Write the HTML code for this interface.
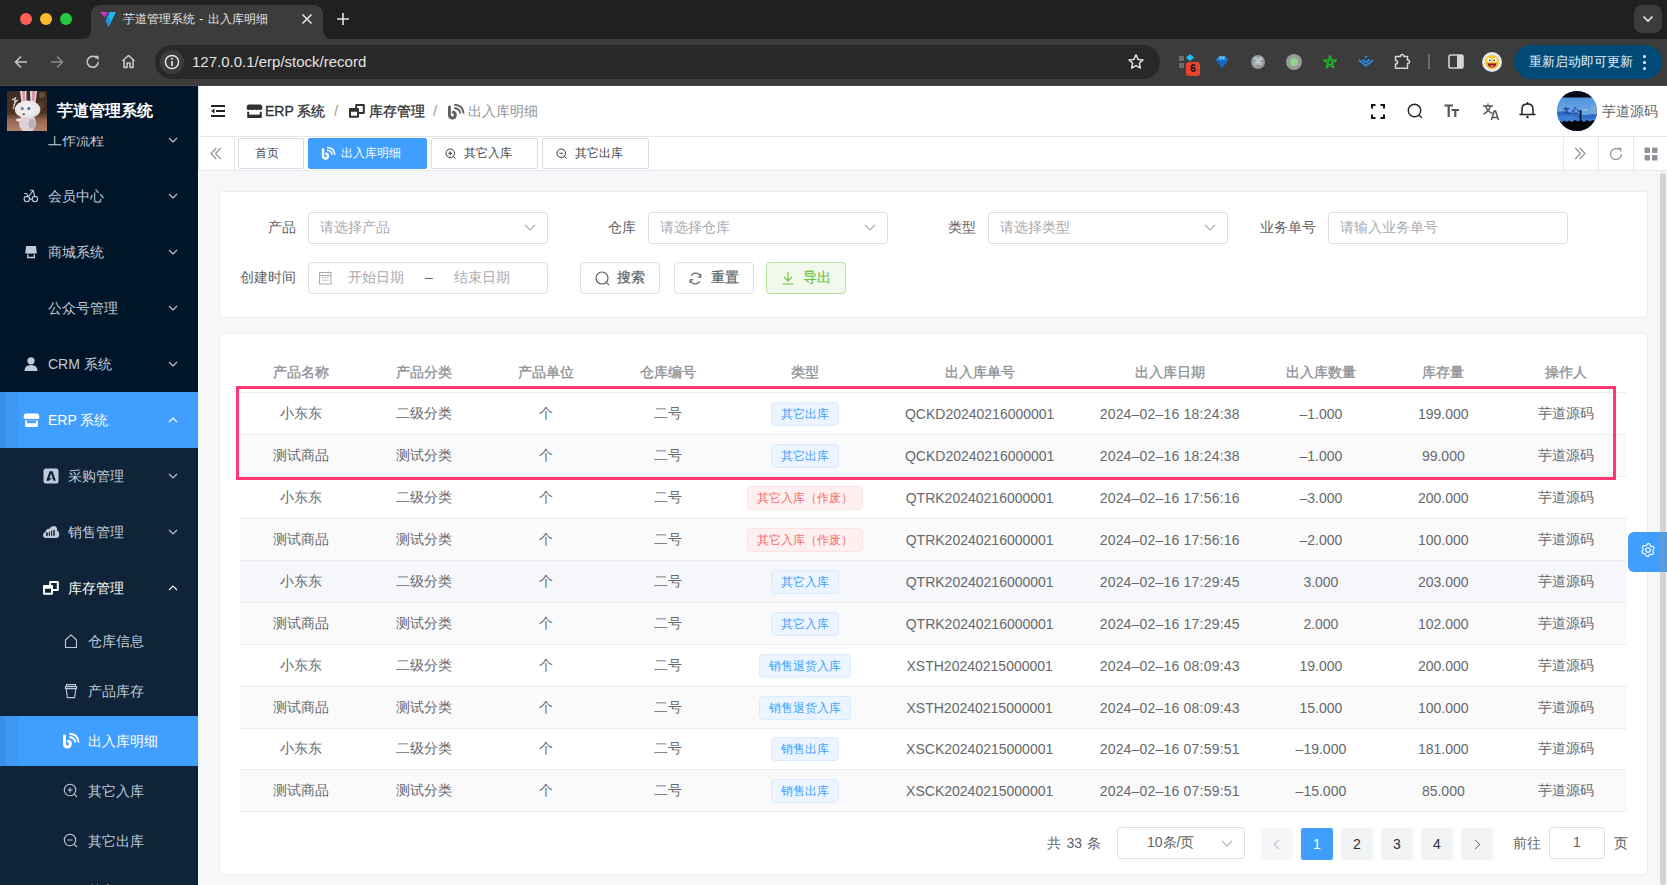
<!DOCTYPE html>
<html><head><meta charset="utf-8">
<style>
*{box-sizing:border-box;margin:0;padding:0}
html,body{width:1667px;height:885px;overflow:hidden;background:#f5f7f9;font-family:"Liberation Sans",sans-serif;}
.abs{position:absolute}
svg{display:block}
/* chrome */
#tabstrip{left:0;top:0;width:1667px;height:39px;background:#1f2020}
#toolbar{left:0;top:39px;width:1667px;height:47px;background:#3c3c3c}
#tab{left:91px;top:5px;width:232px;height:34px;background:#3c3c3c;border-radius:9px 9px 0 0}
.light{width:12px;height:12px;border-radius:50%}
#omni{left:155px;top:45px;width:1005px;height:34px;border-radius:17px;background:#282828}
/* sidebar */
#side{left:0;top:86px;width:198px;height:799px;background:#001529;overflow:hidden}
.mi{position:absolute;left:0;width:198px;color:#bfcbd9;font-size:14px}
.mi .t{position:absolute;top:0}
.arrow{position:absolute;left:168px;width:10px;height:6px}
/* header */
#hdr{left:198px;top:86px;width:1469px;height:51px;background:#fff;border-bottom:1px solid #e4e7ed}
#tags{left:198px;top:137px;width:1469px;height:34px;background:#fff;border-bottom:1px solid #e4e7ed}
.tag{position:absolute;top:1px;height:31px;border:1px solid #d9dce3;border-radius:2px;font-size:12px;color:#45484d;line-height:29px;background:#fff}
.card{position:absolute;left:219px;width:1429px;background:#fff;border:1px solid #e9ecf1;border-radius:4px}
.lbl{position:absolute;font-size:14px;color:#606266;line-height:31px;text-align:right}
.inp{position:absolute;height:32px;border:1px solid #dcdfe6;border-radius:4px;background:#fff;font-size:14px;color:#a8abb2;line-height:29px;padding-left:11px}
.btn{position:absolute;top:262px;height:32px;width:80px;border:1px solid #dcdfe6;border-radius:4px;font-size:14px;color:#606266;line-height:29px;background:#fff;font-weight:normal;-webkit-text-stroke:0.2px currentColor}
table{border-collapse:collapse;table-layout:fixed;position:absolute;left:240px;top:352.5px;width:1387px;font-size:14px;color:#66696e}
th{height:40px;font-weight:normal;-webkit-text-stroke:0.35px #909399;padding-top:1px;color:#909399;border-bottom:1px solid #ebeef5;text-align:center;font-size:14px}
td{height:41.95px;border-bottom:1px solid #ebeef5;text-align:center;padding:1px 0 0 0}
tr.s td{background:#fafafa}
tr.hv td{background:#f5f7fa}
.et{display:inline-block;height:24px;line-height:22px;font-size:12px;padding:0 9px;border:1px solid #d9ecff;background:#ecf5ff;color:#409eff;border-radius:4px;vertical-align:middle}
.et.d{border-color:#fde2e2;background:#fef0f0;color:#f56c6c}
.pg{position:absolute;top:827.5px;width:32px;height:32px;background:#f2f3f5;border-radius:2px;font-size:14px;color:#303133;text-align:center;line-height:32px}
</style></head><body>
<!-- ============ BROWSER CHROME ============ -->
<div id="tabstrip" class="abs"></div>
<div id="toolbar" class="abs"></div>
<div class="abs" style="left:0;top:85px;width:1667px;height:1px;background:#4a4a4a"></div>

<div id="tab" class="abs"></div>
<!-- tab feet -->
<svg class="abs" style="left:81px;top:29px" width="10" height="10" viewBox="0 0 10 10"><path d="M0 10 Q10 10 10 0 V10 Z" fill="#3c3c3c"/></svg>
<svg class="abs" style="left:323px;top:29px" width="10" height="10" viewBox="0 0 10 10"><path d="M10 10 Q0 10 0 0 V10 Z" fill="#3c3c3c"/></svg>
<svg class="abs" style="left:99px;top:10px" width="18" height="18" viewBox="0 0 18 18"><path d="M1 2 H7.5 L5.5 7 Z" fill="#d03ac0"/><path d="M7.5 2 H9 L6.5 7.5 L5.5 7 Z" fill="#a63cc8"/><path d="M10.5 2 H17 L9.5 17 L6.8 10.5 Z" fill="#1fb3f0"/><path d="M9.5 17 L6.8 10.5 L8.5 7 L11.5 10.2 Z" fill="#1a8fe0"/></svg>
<div class="abs" style="left:123px;top:9px;font-size:12px;line-height:20px;color:#e3e3e3;white-space:nowrap;word-spacing:1px">芋道管理系统 - 出入库明细</div>
<svg class="abs" style="left:301px;top:13px" width="12" height="12" viewBox="0 0 12 12"><path d="M1.5 1.5 L10.5 10.5 M10.5 1.5 L1.5 10.5" stroke="#e3e3e3" stroke-width="1.6"/></svg>
<svg class="abs" style="left:336px;top:12px" width="14" height="14" viewBox="0 0 14 14"><path d="M7 1 V13 M1 7 H13" stroke="#e3e3e3" stroke-width="1.6"/></svg>
<!-- nav -->
<svg class="abs" style="left:13px;top:54px" width="16" height="16" viewBox="0 0 16 16"><path d="M14 8 H2.5 M8 2.5 L2.5 8 L8 13.5" stroke="#c7c7c7" stroke-width="1.6" fill="none"/></svg>
<svg class="abs" style="left:49px;top:54px" width="16" height="16" viewBox="0 0 16 16"><path d="M2 8 H13.5 M8 2.5 L13.5 8 L8 13.5" stroke="#8a8a8a" stroke-width="1.6" fill="none"/></svg>
<svg class="abs" style="left:85px;top:54px" width="16" height="16" viewBox="0 0 16 16"><path d="M13.2 8 A5.5 5.5 0 1 1 11.5 3.8" stroke="#c7c7c7" stroke-width="1.6" fill="none"/><path d="M9 1.8 H13.5 V6.3 Z" fill="#c7c7c7"/></svg>
<svg class="abs" style="left:120px;top:53px" width="17" height="17" viewBox="0 0 17 17"><path d="M2.5 8 L8.5 2.5 L14.5 8 M4 6.8 V14.5 H7 V10 H10 V14.5 H13 V6.8" stroke="#c7c7c7" stroke-width="1.6" fill="none" stroke-linejoin="round"/></svg>

<div class="abs light" style="left:20px;top:13px;background:#fe5f57"></div>
<div class="abs light" style="left:40px;top:13px;background:#febc2e"></div>
<div class="abs light" style="left:60px;top:13px;background:#28c840"></div>
<div id="omni" class="abs"></div>
<div class="abs" style="left:160px;top:50px;width:24px;height:24px;border-radius:50%;background:#3c3c3c"></div>
<svg class="abs" style="left:164px;top:54px" width="16" height="16" viewBox="0 0 16 16"><circle cx="8" cy="8" r="6.6" stroke="#e3e3e3" stroke-width="1.5" fill="none"/><path d="M8 7 V12" stroke="#e3e3e3" stroke-width="1.7"/><circle cx="8" cy="4.8" r="1" fill="#e3e3e3"/></svg>
<div class="abs" style="left:192px;top:52px;font-size:15px;line-height:20px;color:#e3e3e3;white-space:nowrap">127.0.0.1/erp/stock/record</div>
<svg class="abs" style="left:1127px;top:53px" width="18" height="18" viewBox="0 0 18 18"><path d="M9 1.8 L11.1 6.4 L16 6.9 L12.3 10.2 L13.4 15.1 L9 12.6 L4.6 15.1 L5.7 10.2 L2 6.9 L6.9 6.4 Z" stroke="#e3e3e3" stroke-width="1.5" fill="none" stroke-linejoin="round"/></svg>
<!-- extensions -->
<div class="abs" style="left:1179px;top:56px;width:5px;height:5px;background:#6b6b6b"></div>
<div class="abs" style="left:1179px;top:63px;width:5px;height:5px;background:#6b6b6b"></div>
<svg class="abs" style="left:1186px;top:54px" width="8" height="7" viewBox="0 0 8 7"><path d="M4 0 L8 3.5 L4 7 L0 3.5 Z" fill="#1ec0f5"/></svg>
<div class="abs" style="left:1186px;top:62px;width:14px;height:14px;border-radius:3px;background:#e8432f;color:#111;font-size:10px;font-weight:bold;line-height:14px;text-align:center">6</div>
<svg class="abs" style="left:1215px;top:55px" width="14" height="14" viewBox="0 0 14 14"><path d="M1 5 L4 1.5 H10 L13 5 L7 13 Z" fill="#1d8fe8"/><path d="M1 5 H13 L7 13 Z" fill="#1568c2"/><path d="M4 1.5 L5.5 5 L7 1.5 L8.5 5 L10 1.5" fill="#7fd0ff"/></svg>
<div class="abs" style="left:1251px;top:55px;width:14px;height:14px;border-radius:50%;background:#9a9a9a;color:#ddd;font-size:10px;line-height:14px;text-align:center">⌘</div>
<div class="abs" style="left:1286px;top:54px;width:16px;height:16px;border-radius:50%;background:#9a9a9a"></div>
<div class="abs" style="left:1290px;top:58px;width:8px;height:8px;border-radius:50%;background:#8fd68a"></div>
<svg class="abs" style="left:1322px;top:54px" width="16" height="16" viewBox="0 0 16 16"><path d="M8 1.5 L11.8 14 L1.5 6 H14.5 L4.2 14 Z" stroke="#1ec41e" stroke-width="1.15" fill="none" stroke-linejoin="round"/></svg>
<svg class="abs" style="left:1358px;top:55px" width="16" height="13" viewBox="0 0 16 13"><path d="M1 5 L8 11 L15 5" stroke="#2f86ea" stroke-width="1.7" fill="none"/><path d="M4.5 4.5 L8 7.3 L11.5 4.5" stroke="#2f86ea" stroke-width="1.7" fill="none"/><circle cx="8" cy="1.7" r="1.3" fill="#2f86ea"/></svg>
<svg class="abs" style="left:1394px;top:53px" width="17" height="17" viewBox="0 0 17 17"><path d="M1.5 3.5 H6.5 Q6.5 1.5 8.2 1.5 Q9.9 1.5 9.9 3.5 H13.5 V7 Q15.5 7 15.5 8.7 Q15.5 10.4 13.5 10.4 V15.3 H1.5 V11 Q3.5 11 3.5 9.2 Q3.5 7.4 1.5 7.4 Z" stroke="#d5d5d5" stroke-width="1.5" fill="none" stroke-linejoin="round"/></svg>
<div class="abs" style="left:1428px;top:54px;width:2px;height:15px;background:#6a6a6a"></div>
<svg class="abs" style="left:1448px;top:54px" width="16" height="15" viewBox="0 0 16 15"><rect x="1" y="1" width="14" height="13" rx="1.5" stroke="#d5d5d5" stroke-width="1.6" fill="none"/><rect x="9" y="1" width="6" height="13" fill="#d5d5d5"/></svg>
<div class="abs" style="left:1482px;top:52px;width:20px;height:20px;border-radius:50%;background:#e8e8e8"></div>
<svg class="abs" style="left:1484px;top:54px" width="16" height="16" viewBox="0 0 16 16"><circle cx="8" cy="8" r="7" fill="#f6c531"/><circle cx="5.3" cy="6" r="2.2" fill="#fff"/><circle cx="10.7" cy="6" r="2.2" fill="#fff"/><circle cx="5.7" cy="6.3" r="0.9" fill="#333"/><circle cx="10.3" cy="6.3" r="0.9" fill="#333"/><path d="M3.5 9 Q8 10 12.5 9 Q12 13.5 8 13.5 Q4 13.5 3.5 9 Z" fill="#8b1a1a"/><path d="M5.5 11.5 Q8 10.5 10.5 11.5 Q9.5 13.3 8 13.3 Q6.5 13.3 5.5 11.5 Z" fill="#e46a8a"/></svg>
<div class="abs" style="left:1514px;top:45px;width:148px;height:34px;border-radius:17px;background:#004a77"></div>
<div class="abs" style="left:1529px;top:52px;font-size:13px;line-height:20px;color:#e6f2ff;white-space:nowrap">重新启动即可更新</div>
<div class="abs" style="left:1643px;top:55px;width:3px;height:3px;border-radius:50%;background:#e6f2ff"></div>
<div class="abs" style="left:1643px;top:61px;width:3px;height:3px;border-radius:50%;background:#e6f2ff"></div>
<div class="abs" style="left:1643px;top:67px;width:3px;height:3px;border-radius:50%;background:#e6f2ff"></div>
<div class="abs" style="left:1634px;top:5px;width:28px;height:28px;border-radius:8px;background:#3c3c3c"></div>
<svg class="abs" style="left:1642px;top:15px" width="12" height="8" viewBox="0 0 12 8"><path d="M1.5 1.5 L6 6 L10.5 1.5" stroke="#e3e3e3" stroke-width="1.7" fill="none"/></svg>


<!-- ============ SIDEBAR ============ -->

<div id="side" class="abs">
  <!-- logo -->
  <div class="abs" style="left:7px;top:5px;width:40px;height:40px;overflow:hidden">
    <svg width="40" height="40" viewBox="0 0 40 40">
      <defs>
        <linearGradient id="lg" x1="0" y1="0" x2="0" y2="1"><stop offset="0" stop-color="#3d2a24"/><stop offset="0.55" stop-color="#4e3224"/><stop offset="0.72" stop-color="#93654d"/><stop offset="1" stop-color="#b48366"/></linearGradient>
        <radialGradient id="hg" cx="0.45" cy="0.4" r="0.6"><stop offset="0" stop-color="#f4f2f3"/><stop offset="0.8" stop-color="#e9e6e8"/><stop offset="1" stop-color="#d8d2d6"/></radialGradient>
      </defs>
      <rect width="40" height="40" fill="url(#lg)"/>
      <circle cx="35" cy="4" r="3" fill="#6b4a33"/>
      <circle cx="34" cy="14" r="3" fill="#5e3f2e"/>
      <path d="M5 9 L8.5 7 L7.5 10.5 L10 9.5 L6.5 14 L8 12 L6 18" stroke="#d7d7d7" stroke-width="1.1" fill="none"/>
      <path d="M13 0 H19.5 V12 H14.5 Z" fill="#e4dcdf"/>
      <path d="M15 0 H18 V10 H16 Z" fill="#d995a6"/>
      <path d="M23 0 H30 L28.5 12 H23.5 Z" fill="#e4dcdf"/>
      <path d="M25 0 H28.5 L27.5 10 H25 Z" fill="#d995a6"/>
      <ellipse cx="20.5" cy="32" rx="8.5" ry="9.5" fill="#ddd0d6"/>
      <ellipse cx="25" cy="33" rx="3.5" ry="5" fill="#b8b3b8"/>
      <ellipse cx="20.6" cy="18.5" rx="12.8" ry="9" fill="url(#hg)"/>
      <path d="M10 25 Q20.6 30 31 25 Q26 27.5 20.6 27.5 Q15 27.5 10 25 Z" fill="#e2c9d2"/>
      <circle cx="15.3" cy="17.4" r="1.5" fill="#3e6aa8"/>
      <circle cx="21.9" cy="17.4" r="1.5" fill="#2f5a96"/>
      <circle cx="15.6" cy="17.2" r="0.5" fill="#cfe0f5"/>
      <circle cx="22.2" cy="17.2" r="0.5" fill="#cfe0f5"/>
      <ellipse cx="16.8" cy="23.2" rx="1.1" ry="0.9" fill="#5a3330"/>
      <ellipse cx="11.5" cy="29" rx="2.5" ry="1.4" fill="#e8e4e6"/>
    </svg>
  </div>
  <div class="abs" style="left:57px;top:13px;font-size:16px;font-weight:bold;color:#fff;line-height:24px;white-space:nowrap">芋道管理系统</div>
  <!-- menu -->
  <div class="abs" style="left:0;top:50px;width:198px;height:749px;overflow:hidden">
    <div class="abs" style="left:0;top:312px;width:198px;height:600px;background:#0f2438"></div>
<div class="mi" style="top:-24px;height:56px;background:transparent;color:#bfcbd9"><div class="t" style="left:48px;line-height:56px">工作流程</div><svg class="arrow" style="top:25px" width="10" height="6" viewBox="0 0 10 6"><path d="M1 1 L5 5 L9 1" stroke="#bfcbd9" stroke-width="1.1" fill="none"/></svg></div>
<div class="mi" style="top:32px;height:56px;background:transparent;color:#bfcbd9"><div class="abs" style="left:23px;top:20px"><svg width="16" height="16" viewBox="0 0 16 16"><circle cx="3.8" cy="11.1" r="2.7" stroke="#bfcbd9" stroke-width="1.1" fill="none"/><circle cx="11.9" cy="11.1" r="2.7" stroke="#bfcbd9" stroke-width="1.1" fill="none"/><path d="M1.2 5.5 H3.6 L5.3 9 M7.2 2.3 H10.3 L5.3 9 M10.3 2.3 L11.6 8.4 M6.5 11.1 H9.2" stroke="#bfcbd9" stroke-width="1.1" fill="none" stroke-linejoin="round"/></svg></div><div class="t" style="left:48px;line-height:56px">会员中心</div><svg class="arrow" style="top:25px" width="10" height="6" viewBox="0 0 10 6"><path d="M1 1 L5 5 L9 1" stroke="#bfcbd9" stroke-width="1.1" fill="none"/></svg></div>
<div class="mi" style="top:88px;height:56px;background:transparent;color:#bfcbd9"><div class="abs" style="left:23px;top:20px"><svg width="16" height="16" viewBox="0 0 16 16"><path d="M3.1 2 H13 L13.8 9 Q12.8 10.3 11.8 9.3 Q10.8 10.3 9.8 9.3 Q8.8 10.3 7.8 9.3 Q6.8 10.3 5.8 9.3 Q4.8 10.3 3.8 9.3 Q2.8 10.3 2.3 9 Z" fill="#bfcbd9"/><path d="M4.7 10.4 V13.5 H11.3 V10.4" stroke="#bfcbd9" stroke-width="1.4" fill="none"/></svg></div><div class="t" style="left:48px;line-height:56px">商城系统</div><svg class="arrow" style="top:25px" width="10" height="6" viewBox="0 0 10 6"><path d="M1 1 L5 5 L9 1" stroke="#bfcbd9" stroke-width="1.1" fill="none"/></svg></div>
<div class="mi" style="top:144px;height:56px;background:transparent;color:#bfcbd9"><div class="t" style="left:48px;line-height:56px">公众号管理</div><svg class="arrow" style="top:25px" width="10" height="6" viewBox="0 0 10 6"><path d="M1 1 L5 5 L9 1" stroke="#bfcbd9" stroke-width="1.1" fill="none"/></svg></div>
<div class="mi" style="top:200px;height:56px;background:transparent;color:#bfcbd9"><div class="abs" style="left:23px;top:20px"><svg width="16" height="16" viewBox="0 0 16 16"><circle cx="8" cy="4.8" r="3.6" fill="#bfcbd9"/><path d="M1.5 15 Q1.5 9 8 9 Q14.5 9 14.5 15 Z" fill="#bfcbd9"/></svg></div><div class="t" style="left:48px;line-height:56px">CRM 系统</div><svg class="arrow" style="top:25px" width="10" height="6" viewBox="0 0 10 6"><path d="M1 1 L5 5 L9 1" stroke="#bfcbd9" stroke-width="1.1" fill="none"/></svg></div>
<div class="mi" style="top:256px;height:56px;background:linear-gradient(90deg,#3a8fe9 0,#3a8fe9 5px,#3e98f5 5px,#3e98f5 19px,#409eff 19px);color:#fff"><div class="abs" style="left:23px;top:20px"><svg width="17" height="16" viewBox="0 0 17 16"><path d="M2.5 1.5 H14.5 Q16 1.5 16.3 4 V6.2 Q14.5 7.6 12.5 6.4 Q10.5 7.6 8.5 6.4 Q6.5 7.6 4.5 6.4 Q2.5 7.6 0.7 6.2 V4 Q1 1.5 2.5 1.5 Z" fill="#fff"/><path d="M2.2 8.4 V14.2 Q2.2 15 3 15 H14 Q14.8 15 14.8 14.2 V8.4" fill="#fff"/><rect x="4" y="8.6" width="9" height="2.6" fill="#409eff"/></svg></div><div class="t" style="left:48px;line-height:56px">ERP 系统</div><svg class="arrow" style="top:25px" width="10" height="6" viewBox="0 0 10 6"><path d="M1 5 L5 1 L9 5" stroke="#fff" stroke-width="1.1" fill="none"/></svg></div>
<div class="mi" style="top:312px;height:56px;background:transparent;color:#bfcbd9"><div class="abs" style="left:43px;top:20px"><svg width="16" height="16" viewBox="0 0 16 16"><rect x="0.5" y="0.5" width="15" height="15" rx="2.5" fill="#bfcbd9"/><path d="M3.3 12.8 L6.6 3.3 H9.6 L12.9 12.8 H10.4 L8.1 5.6 L6.4 10.6 L9.6 10 L6 12.8 Z" fill="#0f2438"/></svg></div><div class="t" style="left:68px;line-height:56px">采购管理</div><svg class="arrow" style="top:25px" width="10" height="6" viewBox="0 0 10 6"><path d="M1 1 L5 5 L9 1" stroke="#bfcbd9" stroke-width="1.1" fill="none"/></svg></div>
<div class="mi" style="top:368px;height:56px;background:transparent;color:#bfcbd9"><div class="abs" style="left:43px;top:20px"><svg width="17" height="16" viewBox="0 0 17 16"><path d="M3 14 Q0 14 0 11 Q0 8.5 2.5 8 Q3 4.8 6.3 4.8 Q7.8 2 11 2 Q14.3 2.2 14.2 6.5 Q16.3 7.5 16.3 10.5 Q16.2 14 13 14 Z" fill="#bfcbd9"/><rect x="3.1" y="8.6" width="1.7" height="3.2" fill="#13263a"/><rect x="5.8" y="7.9" width="1.2" height="3.9" fill="#13263a"/><rect x="8" y="6.6" width="1.1" height="5.2" fill="#13263a"/><rect x="10.1" y="6" width="1.8" height="5.8" fill="#2a3d52"/></svg></div><div class="t" style="left:68px;line-height:56px">销售管理</div><svg class="arrow" style="top:25px" width="10" height="6" viewBox="0 0 10 6"><path d="M1 1 L5 5 L9 1" stroke="#bfcbd9" stroke-width="1.1" fill="none"/></svg></div>
<div class="mi" style="top:424px;height:56px;background:transparent;color:#fff"><div class="abs" style="left:43px;top:20px"><svg width="17" height="16" viewBox="0 0 17 16"><path d="M6.2 5 V2 Q6.2 1 7.2 1 H14.8 Q15.8 1 15.8 2 V10 Q15.8 11 14.8 11 H10 V8.9 H13.8 V3 H8.1 V5 Z" fill="#fff"/><path d="M0 6 Q0 5 1 5 H9 Q10 5 10 6 V13.8 Q10 14.8 9 14.8 H1 Q0 14.8 0 13.8 Z M2 8.8 V12.8 H8 V8.8 Z" fill="#fff" fill-rule="evenodd"/></svg></div><div class="t" style="left:68px;line-height:56px">库存管理</div><svg class="arrow" style="top:25px" width="10" height="6" viewBox="0 0 10 6"><path d="M1 5 L5 1 L9 5" stroke="#fff" stroke-width="1.1" fill="none"/></svg></div>
<div class="mi" style="top:480px;height:50px;background:transparent;color:#bfcbd9"><div class="abs" style="left:63px;top:17px"><svg width="16" height="16" viewBox="0 0 16 16"><path d="M2.5 7 L8 1.8 L13.5 7 V14.5 H2.5 Z" stroke="#bfcbd9" stroke-width="1.1" fill="none" stroke-linejoin="round"/></svg></div><div class="t" style="left:88px;line-height:50px">仓库信息</div></div>
<div class="mi" style="top:530px;height:50px;background:transparent;color:#bfcbd9"><div class="abs" style="left:63px;top:17px"><svg width="16" height="16" viewBox="0 0 16 16"><path d="M3.4 3.4 V1.6 H12.6 V3.4 M2.4 3.6 H13.6 V5.6 H2.4 Z M3.2 5.8 L4.4 14.6 H11.6 L12.8 5.8" stroke="#bfcbd9" stroke-width="1.1" fill="none" stroke-linejoin="round"/></svg></div><div class="t" style="left:88px;line-height:50px">产品库存</div></div>
<div class="mi" style="top:580px;height:50px;background:linear-gradient(90deg,#3a8fe9 0,#3a8fe9 5px,#3e98f5 5px,#3e98f5 19px,#409eff 19px);color:#fff"><div class="abs" style="left:62px;top:16px"><svg width="18" height="18" viewBox="0 0 18 18"><path d="M2.45 4 V12 A2.95 2.95 0 1 0 6.3 9.2" stroke="#fff" stroke-width="2.90" fill="none" stroke-linecap="round"/><path d="M7.2 5 Q12.6 5.3 13.4 10.5" stroke="#fff" stroke-width="1.90" fill="none"/><path d="M7.2 1.8 Q16 2 16.6 10.5" stroke="#fff" stroke-width="1.90" fill="none"/></svg></div><div class="t" style="left:88px;line-height:50px">出入库明细</div></div>
<div class="mi" style="top:630px;height:50px;background:transparent;color:#bfcbd9"><div class="abs" style="left:63px;top:17px"><svg width="16" height="16" viewBox="0 0 16 16"><circle cx="7" cy="7" r="5.7" stroke="#bfcbd9" stroke-width="1.1" fill="none"/><path d="M11.2 11.2 L14 14 M7 4.5 V9.5 M4.5 7 H9.5" stroke="#bfcbd9" stroke-width="1.1" fill="none"/></svg></div><div class="t" style="left:88px;line-height:50px">其它入库</div></div>
<div class="mi" style="top:680px;height:50px;background:transparent;color:#bfcbd9"><div class="abs" style="left:63px;top:17px"><svg width="16" height="16" viewBox="0 0 16 16"><circle cx="7" cy="7" r="5.7" stroke="#bfcbd9" stroke-width="1.1" fill="none"/><path d="M11.2 11.2 L14 14 M4.5 7 H9.5" stroke="#bfcbd9" stroke-width="1.1" fill="none"/></svg></div><div class="t" style="left:88px;line-height:50px">其它出库</div></div>
<div class="mi" style="top:730px;height:50px;background:transparent;color:#bfcbd9"><div class="t" style="left:88px;line-height:50px">其它</div></div>
  </div>
</div>


<!-- ============ HEADER ============ -->

<div id="hdr" class="abs">
  <!-- hamburger -->
  <svg class="abs" style="left:13px;top:19px" width="14" height="12" viewBox="0 0 14 12"><path d="M0 1 H14 M5 6 H14 M0 11 H14" stroke="#222" stroke-width="2"/><path d="M0 6 L3.5 3.5 V8.5 Z" fill="#222"/></svg>
  <!-- breadcrumb -->
  <svg class="abs" style="left:48px;top:18px" width="17" height="14" viewBox="0 0 17 14"><path d="M2.5 0.5 H14.5 Q16 0.5 16.3 3 V5.2 Q14.5 6.6 12.5 5.4 Q10.5 6.6 8.5 5.4 Q6.5 6.6 4.5 5.4 Q2.5 6.6 0.7 5.2 V3 Q1 0.5 2.5 0.5 Z" fill="#303133"/><path d="M2.2 7.8 V13 Q2.2 13.8 3 13.8 H14 Q14.8 13.8 14.8 13 V7.8" stroke="#303133" stroke-width="2" fill="none"/><rect x="3" y="10.6" width="11" height="2.6" fill="#303133"/></svg>
  <div class="abs" style="left:67px;top:0;line-height:50px;font-size:14px;color:#303133;-webkit-text-stroke:0.3px #303133;white-space:nowrap">ERP 系统</div>
  <div class="abs" style="left:136px;top:0;line-height:50px;font-size:15px;color:#9a9da3">/</div>
  <svg class="abs" style="left:151px;top:17px" width="17" height="16" viewBox="0 0 17 16"><path d="M6.2 5 V2 Q6.2 1 7.2 1 H14.8 Q15.8 1 15.8 2 V10 Q15.8 11 14.8 11 H10 V8.9 H13.8 V3 H8.1 V5 Z" fill="#303133"/><path d="M0 6 Q0 5 1 5 H9 Q10 5 10 6 V13.8 Q10 14.8 9 14.8 H1 Q0 14.8 0 13.8 Z M2 8.8 V12.8 H8 V8.8 Z" fill="#303133" fill-rule="evenodd"/></svg>
  <div class="abs" style="left:171px;top:0;line-height:50px;font-size:14px;color:#303133;-webkit-text-stroke:0.3px #303133;white-space:nowrap">库存管理</div>
  <div class="abs" style="left:235px;top:0;line-height:50px;font-size:15px;color:#9a9da3">/</div>
  <svg class="abs" style="left:249px;top:17px" width="18" height="18" viewBox="0 0 18 18"><path d="M2.45 4 V12 A2.95 2.95 0 1 0 6.3 9.2" stroke="#606266" stroke-width="2.90" fill="none" stroke-linecap="round"/><path d="M7.2 5 Q12.6 5.3 13.4 10.5" stroke="#606266" stroke-width="1.90" fill="none"/><path d="M7.2 1.8 Q16 2 16.6 10.5" stroke="#606266" stroke-width="1.90" fill="none"/></svg>
  <div class="abs" style="left:270px;top:0;line-height:50px;font-size:14px;color:#909399;white-space:nowrap">出入库明细</div>
  <!-- right tools -->
  <svg class="abs" style="left:1173px;top:18px" width="14" height="15" viewBox="0 0 14 15"><path d="M1 4.5 V1 H4.5 M9.5 1 H13 V4.5 M13 10.5 V14 H9.5 M4.5 14 H1 V10.5" stroke="#111" stroke-width="2" fill="none"/></svg>
  <svg class="abs" style="left:1209px;top:17px" width="16" height="16" viewBox="0 0 16 16"><circle cx="7.5" cy="7.5" r="6.2" stroke="#222" stroke-width="1.4" fill="none"/><path d="M12 12 L14.8 14.8" stroke="#222" stroke-width="1.4"/></svg>
  <svg class="abs" style="left:1246px;top:18px" width="16" height="14" viewBox="0 0 16 14"><path d="M0.5 1.5 H9 M4.7 1.5 V13 M7.5 6 H15 M11.3 6 V13" stroke="#555" stroke-width="2.2" fill="none"/></svg>
  <div class="abs" style="left:1284px;top:16px;width:18px;height:18px;overflow:visible">
    <svg width="18" height="18" viewBox="0 0 18 18"><path d="M1 4 H11 M6 1.5 V4 M3.5 4 Q5.5 9.5 10.5 11.5 M8.5 4 Q7 9.5 1.5 12" stroke="#555" stroke-width="1.4" fill="none"/><path d="M9 19 L12.3 9 H13.5 L16.8 19 M10.3 15.5 H15.5" stroke="#555" stroke-width="1.5" fill="none"/></svg>
  </div>
  <svg class="abs" style="left:1321px;top:15px" width="17" height="18" viewBox="0 0 17 18"><path d="M3 13 V8 Q3 3 8.5 3 Q14 3 14 8 V13 M1 13.5 H16" stroke="#222" stroke-width="1.5" fill="none" stroke-linecap="round"/><path d="M8.5 1 V3" stroke="#222" stroke-width="1.5"/><circle cx="8.5" cy="16" r="1.2" fill="#222"/></svg>
  <!-- avatar -->
  <div class="abs" style="left:1359px;top:5px;width:40px;height:40px;border-radius:50%;overflow:hidden;background:#5b9de0">
    <svg width="40" height="40" viewBox="0 0 40 40">
      <defs><linearGradient id="ag" x1="0" y1="0" x2="0" y2="1"><stop offset="0" stop-color="#4a8ad6"/><stop offset="0.5" stop-color="#66a7e8"/><stop offset="1" stop-color="#5597de"/></linearGradient></defs>
      <rect width="40" height="40" fill="url(#ag)"/>
      <rect width="40" height="6.5" fill="#060a14"/>
      <path d="M0 21 Q10 19 20 23 Q30 26 40 21 V27 Q30 30 20 27 Q10 24 0 27 Z" fill="#2e6cc6"/>
      <path d="M0 25 Q12 23 22 27 Q32 30 40 26 V31 H0 Z" fill="#3b7fd6"/>
      <text x="5.5" y="21.5" font-size="7" font-weight="bold" fill="#1b2a80" font-family="Liberation Sans">文</text>
      <text x="14.5" y="21.5" font-size="7" font-weight="bold" fill="#1b2a80" font-family="Liberation Sans">心</text>
      <rect x="24" y="18.5" width="7" height="1.4" fill="#9ab7d8"/>
      <rect x="34" y="15" width="6" height="8" fill="#7ea6cf"/>
      <rect x="22.5" y="19" width="2" height="12" fill="#0d1a33"/>
      <path d="M0 32 L3 30 L5 31.5 L7 29.5 L10 31 L12 29.5 L15 31 L18 29 L21 30.5 L24 29 L27 31 L30 29 L33 30.5 L36 29 L40 30.5 V40 H0 Z" fill="#05070c"/>
    </svg>
  </div>
  <div class="abs" style="left:1404px;top:0;line-height:50px;font-size:14px;color:#606266;white-space:nowrap">芋道源码</div>
</div>
<div id="tags" class="abs">
  <svg class="abs" style="left:12px;top:10px" width="12" height="13" viewBox="0 0 12 13"><path d="M6.3 1 L1 6.5 L6.3 12 M10.8 1 L5.5 6.5 L10.8 12" stroke="#8c8f95" stroke-width="1.15" fill="none"/></svg>
  <div class="abs" style="left:36px;top:0;width:1px;height:34px;background:#e4e7ed"></div>
  <div class="tag" style="left:40px;width:66px;padding-left:16px">首页</div>
  <div class="tag" style="left:110px;width:119px;background:#409eff;border-color:#409eff;color:#fff">
    <svg class="abs" style="left:12px;top:7px" width="15" height="15" viewBox="0 0 18 18"><path d="M2.45 4 V12 A2.95 2.95 0 1 0 6.3 9.2" stroke="#fff" stroke-width="2.90" fill="none" stroke-linecap="round"/><path d="M7.2 5 Q12.6 5.3 13.4 10.5" stroke="#fff" stroke-width="1.90" fill="none"/><path d="M7.2 1.8 Q16 2 16.6 10.5" stroke="#fff" stroke-width="1.90" fill="none"/></svg>
    <span class="abs" style="left:32px;top:0">出入库明细</span>
  </div>
  <div class="tag" style="left:233px;width:107px">
    <svg class="abs" style="left:13px;top:9px" width="12" height="12" viewBox="0 0 16 16"><circle cx="7" cy="7" r="5.7" stroke="#303133" stroke-width="1.3" fill="none"/><path d="M11.2 11.2 L14 14 M7 4.5 V9.5 M4.5 7 H9.5" stroke="#303133" stroke-width="1.3" fill="none"/></svg>
    <span class="abs" style="left:32px;top:0">其它入库</span>
  </div>
  <div class="tag" style="left:344px;width:107px">
    <svg class="abs" style="left:13px;top:9px" width="12" height="12" viewBox="0 0 16 16"><circle cx="7" cy="7" r="5.7" stroke="#303133" stroke-width="1.3" fill="none"/><path d="M11.2 11.2 L14 14 M4.5 7 H9.5" stroke="#303133" stroke-width="1.3" fill="none"/></svg>
    <span class="abs" style="left:32px;top:0">其它出库</span>
  </div>
  <div class="abs" style="left:1365px;top:0;width:1px;height:34px;background:#e4e7ed"></div>
  <div class="abs" style="left:1400px;top:0;width:1px;height:34px;background:#e4e7ed"></div>
  <div class="abs" style="left:1435px;top:0;width:1px;height:34px;background:#e4e7ed"></div>
  <svg class="abs" style="left:1376px;top:10px" width="12" height="13" viewBox="0 0 12 13"><path d="M1.2 1 L6.5 6.5 L1.2 12 M5.7 1 L11 6.5 L5.7 12" stroke="#8c8f95" stroke-width="1.15" fill="none"/></svg>
  <svg class="abs" style="left:1411px;top:10px" width="14" height="14" viewBox="0 0 14 14"><path d="M12.5 7 A5.5 5.5 0 1 1 10.5 2.8" stroke="#909399" stroke-width="1.2" fill="none"/><path d="M9 1.2 L12 1.5 L11.5 4.5" stroke="#909399" stroke-width="1.2" fill="none"/></svg>
  <svg class="abs" style="left:1446px;top:10px" width="14" height="14" viewBox="0 0 14 14"><rect x="0.5" y="0.5" width="5.5" height="5.5" rx="1" fill="#909399"/><rect x="8" y="0.5" width="5.5" height="5.5" rx="1" fill="#909399"/><rect x="0.5" y="8" width="5.5" height="5.5" rx="1" fill="#909399"/><rect x="8" y="8" width="5.5" height="5.5" rx="1" fill="#909399"/></svg>
</div>


<div class="abs" style="left:198px;top:86px;width:1px;height:85px;background:#dfe2e7"></div>
<!-- ============ CONTENT ============ -->

<div class="card" style="top:191px;height:127px"></div>
<div class="lbl" style="left:240px;top:212px;width:56px">产品</div>
<div class="inp" style="left:308px;top:212px;width:240px">请选择产品</div>
<svg class="abs" style="left:524px;top:224px" width="12" height="7" viewBox="0 0 12 7"><path d="M0.8 0.8 L6 6 L11.2 0.8" stroke="#a8abb2" stroke-width="1.1" fill="none"/></svg>
<div class="lbl" style="left:580px;top:212px;width:56px">仓库</div>
<div class="inp" style="left:648px;top:212px;width:240px">请选择仓库</div>
<svg class="abs" style="left:864px;top:224px" width="12" height="7" viewBox="0 0 12 7"><path d="M0.8 0.8 L6 6 L11.2 0.8" stroke="#a8abb2" stroke-width="1.1" fill="none"/></svg>
<div class="lbl" style="left:920px;top:212px;width:56px">类型</div>
<div class="inp" style="left:988px;top:212px;width:240px">请选择类型</div>
<svg class="abs" style="left:1204px;top:224px" width="12" height="7" viewBox="0 0 12 7"><path d="M0.8 0.8 L6 6 L11.2 0.8" stroke="#a8abb2" stroke-width="1.1" fill="none"/></svg>
<div class="lbl" style="left:1240px;top:212px;width:76px">业务单号</div>
<div class="inp" style="left:1328px;top:212px;width:240px">请输入业务单号</div>
<div class="lbl" style="left:220px;top:262px;width:76px">创建时间</div>
<div class="inp" style="left:308px;top:262px;width:240px;padding-left:0">
  <svg class="abs" style="left:10px;top:8px" width="13" height="14" viewBox="0 0 13 14"><rect x="0.5" y="1.5" width="11.5" height="11.5" stroke="#a8abb2" stroke-width="1" fill="none"/><path d="M0.5 4.5 H12 M3 0.5 V2.5 M9.5 0.5 V2.5 M3 6.7 H4.5 M5.5 6.7 H7 M8 6.7 H9.5 M3 9.2 H4.5 M5.5 9.2 H7 M8 9.2 H9.5" stroke="#a8abb2" stroke-width="1"/></svg>
  <span class="abs" style="left:39px;top:0">开始日期</span>
  <span class="abs" style="left:116px;top:0;color:#606266">–</span>
  <span class="abs" style="left:145px;top:0">结束日期</span>
</div>
<div class="btn" style="left:580px">
  <svg class="abs" style="left:14px;top:8px" width="15" height="15" viewBox="0 0 15 15"><circle cx="7" cy="7" r="6" stroke="#606266" stroke-width="1.2" fill="none"/><path d="M11.3 11.3 L14 14" stroke="#606266" stroke-width="1.2"/></svg>
  <span class="abs" style="left:36px;top:0">搜索</span>
</div>
<div class="btn" style="left:674px">
  <svg class="abs" style="left:14px;top:9px" width="13" height="13" viewBox="0 0 13 13"><path d="M11.5 5 A5 5 0 0 0 2.2 3.8 M1.5 8 A5 5 0 0 0 10.8 9.2" stroke="#606266" stroke-width="1.1" fill="none"/><path d="M11.8 1.8 V5.2 H8.5 M1.2 11.2 V7.8 H4.5" stroke="#606266" stroke-width="1.1" fill="none"/></svg>
  <span class="abs" style="left:36px;top:0">重置</span>
</div>
<div class="btn" style="left:766px;background:#f0f9eb;border-color:#b3e19d;color:#67c23a">
  <svg class="abs" style="left:14px;top:8px" width="14" height="14" viewBox="0 0 14 14"><path d="M7 1 V10 M3 6 L7 10 L11 6 M1.5 13 H12.5" stroke="#67c23a" stroke-width="1.1" fill="none"/></svg>
  <span class="abs" style="left:36px;top:0">导出</span>
</div>

<div class="card" style="top:333px;height:542px"></div>
<table><colgroup><col style="width:122.429px"><col style="width:122.429px"><col style="width:122.429px"><col style="width:122.429px"><col style="width:150.000px"><col style="width:200.000px"><col style="width:180.000px"><col style="width:122.429px"><col style="width:122.429px"><col style="width:122.429px"></colgroup>
<thead><tr><th>产品名称</th><th>产品分类</th><th>产品单位</th><th>仓库编号</th><th>类型</th><th>出入库单号</th><th>出入库日期</th><th>出入库数量</th><th>库存量</th><th>操作人</th></tr></thead>
<tbody><tr><td>小东东</td><td>二级分类</td><td>个</td><td>二号</td><td><span class="et ">其它出库</span></td><td>QCKD20240216000001</td><td style="letter-spacing:0.2px">2024–02–16 18:24:38</td><td>–1.000</td><td>199.000</td><td>芋道源码</td></tr><tr class="s"><td>测试商品</td><td>测试分类</td><td>个</td><td>二号</td><td><span class="et ">其它出库</span></td><td>QCKD20240216000001</td><td style="letter-spacing:0.2px">2024–02–16 18:24:38</td><td>–1.000</td><td>99.000</td><td>芋道源码</td></tr><tr><td>小东东</td><td>二级分类</td><td>个</td><td>二号</td><td><span class="et d">其它入库（作废）</span></td><td>QTRK20240216000001</td><td style="letter-spacing:0.2px">2024–02–16 17:56:16</td><td>–3.000</td><td>200.000</td><td>芋道源码</td></tr><tr class="s"><td>测试商品</td><td>测试分类</td><td>个</td><td>二号</td><td><span class="et d">其它入库（作废）</span></td><td>QTRK20240216000001</td><td style="letter-spacing:0.2px">2024–02–16 17:56:16</td><td>–2.000</td><td>100.000</td><td>芋道源码</td></tr><tr class="hv"><td>小东东</td><td>二级分类</td><td>个</td><td>二号</td><td><span class="et ">其它入库</span></td><td>QTRK20240216000001</td><td style="letter-spacing:0.2px">2024–02–16 17:29:45</td><td>3.000</td><td>203.000</td><td>芋道源码</td></tr><tr class="s"><td>测试商品</td><td>测试分类</td><td>个</td><td>二号</td><td><span class="et ">其它入库</span></td><td>QTRK20240216000001</td><td style="letter-spacing:0.2px">2024–02–16 17:29:45</td><td>2.000</td><td>102.000</td><td>芋道源码</td></tr><tr><td>小东东</td><td>二级分类</td><td>个</td><td>二号</td><td><span class="et ">销售退货入库</span></td><td>XSTH20240215000001</td><td style="letter-spacing:0.2px">2024–02–16 08:09:43</td><td>19.000</td><td>200.000</td><td>芋道源码</td></tr><tr class="s"><td>测试商品</td><td>测试分类</td><td>个</td><td>二号</td><td><span class="et ">销售退货入库</span></td><td>XSTH20240215000001</td><td style="letter-spacing:0.2px">2024–02–16 08:09:43</td><td>15.000</td><td>100.000</td><td>芋道源码</td></tr><tr><td>小东东</td><td>二级分类</td><td>个</td><td>二号</td><td><span class="et ">销售出库</span></td><td>XSCK20240215000001</td><td style="letter-spacing:0.2px">2024–02–16 07:59:51</td><td>–19.000</td><td>181.000</td><td>芋道源码</td></tr><tr class="s"><td>测试商品</td><td>测试分类</td><td>个</td><td>二号</td><td><span class="et ">销售出库</span></td><td>XSCK20240215000001</td><td style="letter-spacing:0.2px">2024–02–16 07:59:51</td><td>–15.000</td><td>85.000</td><td>芋道源码</td></tr></tbody></table>
<div class="abs" style="left:236px;top:386px;width:381px;height:94px;border:3px solid #ff3873;width:1380px"></div>
<!-- pagination -->
<div class="abs" style="left:1047px;top:827px;line-height:32px;font-size:14px;color:#606266;white-space:nowrap;word-spacing:1.5px">共 33 条</div>
<div class="inp" style="left:1117px;top:827px;width:128px;color:#606266;padding-left:29px">10条/页</div>
<svg class="abs" style="left:1221px;top:840px" width="12" height="7" viewBox="0 0 12 7"><path d="M0.8 0.8 L6 6 L11.2 0.8" stroke="#a8abb2" stroke-width="1.1" fill="none"/></svg>
<div class="pg" style="left:1261px;color:#c0c4cc;background:#f5f6f8"><svg style="position:absolute;left:12px;top:11px" width="7" height="11" viewBox="0 0 7 11"><path d="M6 0.8 L1.2 5.5 L6 10.2" stroke="#c0c4cc" stroke-width="1.1" fill="none"/></svg></div>
<div class="pg" style="left:1301px;background:#409eff;color:#fff">1</div>
<div class="pg" style="left:1341px">2</div>
<div class="pg" style="left:1381px">3</div>
<div class="pg" style="left:1421px">4</div>
<div class="pg" style="left:1461px"><svg style="position:absolute;left:13px;top:11px" width="7" height="11" viewBox="0 0 7 11"><path d="M1 0.8 L5.8 5.5 L1 10.2" stroke="#606266" stroke-width="1" fill="none"/></svg></div>
<div class="abs" style="left:1513px;top:827px;line-height:32px;font-size:14px;color:#606266">前往</div>
<div class="inp" style="left:1549px;top:827px;width:56px;color:#606266;text-align:center;padding:0">1</div>
<div class="abs" style="left:1614px;top:827px;line-height:32px;font-size:14px;color:#606266">页</div>
<!-- settings -->
<div class="abs" style="left:1628px;top:532px;width:45px;height:40px;background:#409eff;border-radius:6px 0 0 6px">
  <svg class="abs" style="left:13px;top:11px" width="14" height="14" viewBox="0 0 14 14"><path d="M5.71 2.17 L6.67 0.61 L8.66 0.82 L9.27 2.54 L10.54 3.46 L12.37 3.51 L13.18 5.34 L11.99 6.74 L11.83 8.29 L12.70 9.91 L11.53 11.53 L9.72 11.19 L8.29 11.83 L7.33 13.39 L5.34 13.18 L4.73 11.46 L3.46 10.54 L1.63 10.49 L0.82 8.66 L2.01 7.26 L2.17 5.71 L1.30 4.09 L2.47 2.47 L4.28 2.81 Z" stroke="#fff" stroke-width="1.1" fill="none" stroke-linejoin="round"/><circle cx="7" cy="7" r="2.3" stroke="#fff" stroke-width="1.1" fill="none"/></svg>
</div>
<!-- scrollbar -->
<div class="abs" style="left:1660px;top:173px;width:6px;height:712px;border-radius:3px;background:rgba(144,147,153,0.35)"></div>


</body></html>
